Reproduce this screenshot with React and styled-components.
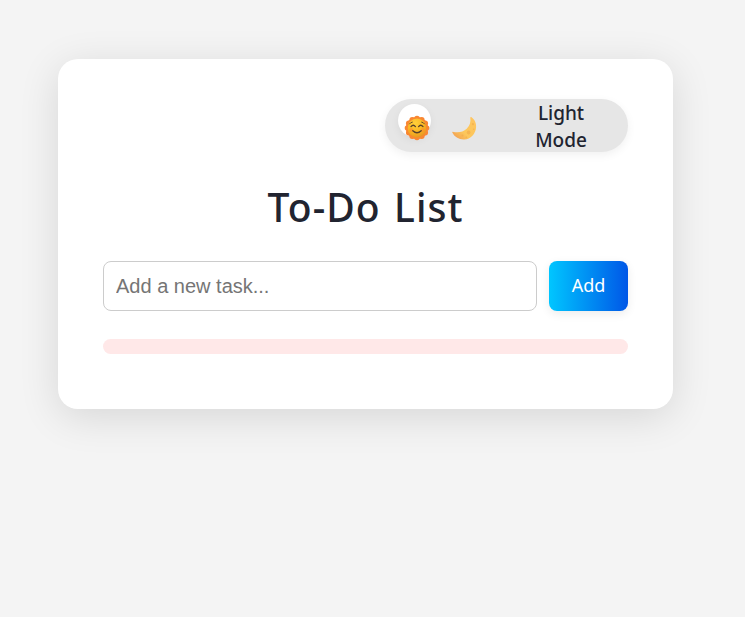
import React, { useState } from "react";
import styled, { createGlobalStyle } from "styled-components";

const GlobalStyle = createGlobalStyle`
  * { box-sizing: border-box; }
  body { margin: 0; background: #f4f4f4; }
`;

const Page = styled.main`
  min-height: 617px;
  padding: 59px 72px 0 58px;
  font-family: "Segoe UI", "Noto Sans", sans-serif;
  color: #212430;
`;

const Card = styled.section`
  display: flex;
  flex-direction: column;
  height: 350px;
  padding: 40px 45px 0;
  border-radius: 20px;
  background: #fff;
  box-shadow: 0 8px 40px rgba(0, 0, 0, 0.12);
`;

const ModeSwitch = styled.button`
  display: flex;
  align-self: flex-end;
  position: relative;
  width: 243px;
  height: 53px;
  padding: 0;
  border: 0;
  border-radius: 27px;
  background: #e6e6e6;
  box-shadow: 0 3px 10px rgba(0, 0, 0, 0.06);
  color: inherit;
  font-family: inherit;
`;

const Thumb = styled.span`
  position: absolute;
  top: 5px;
  left: ${({ $dark }) => ($dark ? "60px" : "13px")};
  width: 33px;
  height: 33px;
  border-radius: 50%;
  background: #fff;
  box-shadow: 0 3px 8px rgba(0, 0, 0, 0.06);
`;

const Icons = styled.span`
  display: flex;
  position: relative;
  gap: 22px;
  padding: 16px 0 0 19px;
  width: 133px;

  svg { display: block; width: 26px; height: 26px; }
`;

const ModeLabel = styled.span`
  width: 86px;
  padding-top: 1px;
  font-size: 19px;
  font-weight: 550;
  line-height: 26.5px;
  text-align: center;
`;

const Title = styled.h1`
  margin: 28px 0 0;
  height: 54px;
  font-size: 39px;
  font-weight: 500;
  line-height: 54px;
  letter-spacing: 1px;
  word-spacing: 2.5px;
  text-align: center;
`;

const TaskForm = styled.form`
  display: flex;
  gap: 12px;
  margin-top: 27px;
`;

const TaskInput = styled.input`
  flex: 1;
  min-width: 0;
  height: 50px;
  padding: 0 12px;
  border: 1px solid #ccc;
  border-radius: 8px;
  background: #fff;
  font: 20px "Liberation Sans", Arial, sans-serif;

  &::placeholder { color: #757575; opacity: 1; }
`;

const AddButton = styled.button`
  width: 79px;
  height: 50px;
  padding: 0 0 2px;
  border: 0;
  border-radius: 8px;
  background: linear-gradient(90deg, #00c6ff 0%, #0057e7 100%);
  box-shadow: 0 3px 10px rgba(0, 0, 0, 0.08);
  color: #fff;
  font: 400 18px "Segoe UI", "Noto Sans", sans-serif;
`;

const TaskList = styled.ul`
  height: 15px;
  margin: 28px 0 0;
  padding: 0;
  border-radius: 8px;
  background: #ffe8e8;
  list-style: none;
`;

const petals = Array.from({ length: 12 }, (_, i) => {
  const angle = (i * Math.PI) / 6;
  return { x: 13 + Math.cos(angle) * 9.5, y: 13 + Math.sin(angle) * 9.5 };
});

function Sun() {
  return (
    <svg viewBox="0 0 26 26" aria-hidden="true">
      <defs>
        <radialGradient id="sun-face" cx="40%" cy="25%" r="75%">
          <stop offset="0" stopColor="#ffd03a" />
          <stop offset="0.65" stopColor="#f9b522" />
          <stop offset="1" stopColor="#e89822" />
        </radialGradient>
      </defs>
      <circle cx="13" cy="13" r="11.1" fill="#f98732" />
      {petals.map((p, i) => (
        <circle key={i} cx={p.x} cy={p.y} r="2.8" fill="#f98732" />
      ))}
      <circle cx="13" cy="13" r="9.4" fill="url(#sun-face)" />
      <circle cx="7.4" cy="15" r="2" fill="#ff8b2b" opacity=".55" />
      <circle cx="18.6" cy="15" r="2" fill="#ff8b2b" opacity=".55" />
      <g fill="none" stroke="#58412b" strokeLinecap="round" strokeWidth="1.3">
        <path d="M5.5 8.9Q6.5 7.3 8.3 7.1M17.7 7.1Q19.5 7.3 20.5 8.9" strokeWidth=".9" />
        <path d="M7 11.6Q9.3 8.9 11.4 11.6M14.6 11.6Q16.7 8.9 19 11.6" />
        <path d="M8.8 15.8Q13 19.8 17.2 15.8" />
      </g>
    </svg>
  );
}

function Moon() {
  return (
    <svg viewBox="0 0 26 26" aria-hidden="true">
      <defs>
        <linearGradient id="moon-fill" x1="1" y1="0" x2="0" y2="1">
          <stop offset="0" stopColor="#ffc45f" />
          <stop offset="0.6" stopColor="#fcc75b" />
          <stop offset="1" stopColor="#ef9650" />
        </linearGradient>
      </defs>
      <path d="M19.2 2.1C22.5 4.3 24.4 8 24.1 12.2C23.7 18.7 18.7 24.2 12.2 24.5C7 24.7 2.4 21.7 .4 17.8C.1 17.1 .6 16.6 1.4 16.9C6.1 18 11.3 17.1 14.7 13.8C17.8 10.8 19 6.9 18.3 2.8C18.2 2.2 18.7 1.8 19.2 2.1Z" fill="url(#moon-fill)" />
      <g fill="#efa447" opacity=".5">
        <ellipse cx="16.6" cy="17.5" rx="1.8" ry="2" />
        <circle cx="20.9" cy="9.2" r="1.1" />
        <circle cx="10.5" cy="20.4" r="1" />
        <circle cx="21.7" cy="14.2" r=".8" />
        <circle cx="14.3" cy="22.2" r=".8" />
      </g>
    </svg>
  );
}

export default function App() {
  const [dark, setDark] = useState(false);
  return (
    <>
      <GlobalStyle />
      <Page>
        <Card>
          <ModeSwitch type="button" onClick={() => setDark(!dark)}>
            <Thumb $dark={dark} />
            <Icons><Sun /><Moon /></Icons>
            <ModeLabel>{dark ? "Dark" : "Light"}<br />Mode</ModeLabel>
          </ModeSwitch>
          <Title>To-Do List</Title>
          <TaskForm onSubmit={(event) => event.preventDefault()}>
            <TaskInput placeholder="Add a new task..." />
            <AddButton>Add</AddButton>
          </TaskForm>
          <TaskList />
        </Card>
      </Page>
    </>
  );
}
